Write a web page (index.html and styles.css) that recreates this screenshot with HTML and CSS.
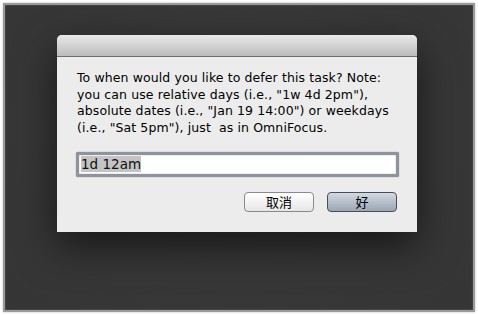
FILE: index.html
```html
<!DOCTYPE html>
<html lang="en">
<head>
    <meta charset="UTF-8">
    <title>Defer</title>
    <link rel="stylesheet" href="styles.css">
</head>
<body>
    <div class="screen">
        <div class="dialog">
            <div class="titlebar"></div>
            <div class="content">
                <p class="message">To when would you like to defer this task? Note:<br>you can use relative days (i.e., "1w 4d 2pm"),<br>absolute dates (i.e., "Jan 19 14:00") or weekdays<br>(i.e., "Sat 5pm"), just&nbsp; as in OmniFocus.</p>
                <div class="field"><span class="selected">1d 12am</span></div>
                <div class="buttons">
                    <button class="btn">取消</button>
                    <button class="btn btn-default">好</button>
                </div>
            </div>
        </div>
    </div>
</body>
</html>
```

FILE: styles.css
```css
* {
    margin: 0;
    padding: 0;
    box-sizing: border-box;
}

html, body {
    height: 100%;
    background: #ffffff;
    font-family: 'DejaVu Sans', 'Noto Sans CJK SC', sans-serif;
    overflow: hidden;
}

.screen {
    margin: 3px;
    width: 472px;
    height: 309px;
    border: 2px solid #9a9a9a;
    box-shadow: 0 0 2px #bbb, inset 0 0 2px #666;
    background: radial-gradient(ellipse at 50% 40%, #3b3b3b 0%, #373737 60%, #353535 100%);
    padding: 30px 0 0 52px;
}

.dialog {
    width: 360px;
    height: 197px;
    background: #ececec;
    border-radius: 5px 5px 0 0;
    box-shadow: 0 14px 40px rgba(0, 0, 0, 0.6);
}

.titlebar {
    height: 22px;
    border-radius: 5px 5px 0 0;
    background: linear-gradient(#e9e9e9, #d2d2d2 50%, #bcbcbc);
    border-bottom: 1px solid #6e6e6e;
}

.content {
    padding: 13px 20px 0 20px;
}

.message {
    font-size: 12.5px;
    line-height: 16.7px;
    letter-spacing: 0.1px;
    color: #000;
    white-space: nowrap;
}

.field {
    margin: 15px 0 0 -1px;
    width: 323px;
    height: 25px;
    background: #fff;
    border: 3px solid #8d949c;
    border-radius: 2px;
    box-shadow: 0 0 1px #666, inset 0 0 1px #555;
    padding: 1px 2px;
    font-size: 13.5px;
    line-height: 17px;
}

.selected {
    background: #c4c4c4;
    color: #111;
}

.buttons {
    display: flex;
    justify-content: flex-end;
    gap: 13px;
    margin-top: 15px;
}

.btn {
    width: 70px;
    height: 20px;
    border: 1px solid #8a8a8a;
    border-radius: 4px;
    background: linear-gradient(#ffffff, #f3f3f3 50%, #e6e6e6);
    font-family: 'Noto Sans CJK SC', sans-serif;
    font-size: 13px;
    line-height: 18px;
    color: #000;
}

.btn-default {
    border-color: #4a4f57;
    background: linear-gradient(#d3d9e1, #b6bfcb 50%, #9ca6b3);
}
```
